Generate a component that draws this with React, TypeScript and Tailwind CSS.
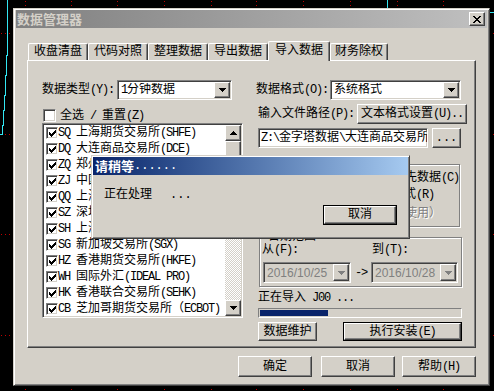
import type { ReactNode } from 'react'

const raised =
  'border border-t-white border-l-white border-r-[#404040] border-b-[#404040] shadow-[inset_-1px_-1px_#808080]'
const sunken =
  'border border-t-[#808080] border-l-[#808080] border-r-white border-b-white shadow-[inset_1px_1px_#404040,inset_-1px_-1px_#d4d0c8]'
const etched = 'border border-[#808080] shadow-[inset_1px_1px_#fff,1px_1px_#fff]'
const greyed = 'text-[#808080] [text-shadow:1px_1px_0_#fff]'

const markets = [
  ['SQ', '上海期货交易所(SHFE)'],
  ['DQ', '大连商品交易所(DCE)'],
  ['ZQ', '郑州商品交易所(CZCE)'],
  ['ZJ', '中国金融期货交易所(CFFEX)'],
  ['QQ', '上海国际能源交易中心(INE)'],
  ['SZ', '深圳证券交易所(SZSE)'],
  ['SH', '上海证券交易所(SSE)'],
  ['SG', '新加坡交易所(SGX)'],
  ['HZ', '香港期货交易所(HKFE)'],
  ['WH', '国际外汇(IDEAL PRO)'],
  ['HK', '香港联合交易所(SEHK)'],
  ['CB', '芝加哥期货交易所（ECBOT)'],
]

const tabs = [
  { label: '收盘清盘', w: 'w-[60px]' },
  { label: '代码对照', w: 'w-[60px]' },
  { label: '整理数据', w: 'w-[60px]' },
  { label: '导出数据', w: 'w-[60px]' },
  { label: '导入数据', w: 'w-[62px]', active: true },
  { label: '财务除权', w: 'w-[58px]' },
]

const checkPixels = [
  [6, 0], [5, 1], [6, 1], [0, 2], [4, 2], [5, 2], [6, 2], [0, 3], [1, 3], [3, 3], [4, 3], [5, 3],
  [0, 4], [1, 4], [2, 4], [3, 4], [4, 4], [1, 5], [2, 5], [3, 5], [2, 6],
]

// half-width latin runs: squeeze the mono font down to ~6px per char like the old system font
function t(text: string) {
  return text.split(/([\x20-\x7e]+)/).map((part, i) =>
    /^[\x20-\x7e]+$/.test(part) ? (
      <span key={i} className="tracking-[-1.2px]">
        {part}
      </span>
    ) : (
      part
    ),
  )
}

function Arrow({ up = false, gray = false }: { up?: boolean; gray?: boolean }) {
  return (
    <svg width="7" height="4" viewBox="0 0 7 4" shapeRendering="crispEdges">
      <path
        d={up ? 'M3 0h1v1h1v1h1v1h1v1H0V3h1V2h1V1h1z' : 'M0 0h7v1H6v1H5v1H4v1H3V3H2V2H1V1H0z'}
        fill={gray ? '#808080' : '#000'}
      />
    </svg>
  )
}

function Check({ checked = false, size = 'h-[13px] w-[13px]' }: { checked?: boolean; size?: string }) {
  return (
    <div className={`flex shrink-0 items-center justify-center bg-white ${size} ${sunken}`}>
      {checked && (
        <svg width="7" height="7" viewBox="0 0 7 7" shapeRendering="crispEdges">
          {checkPixels.map(([x, y]) => (
            <rect key={`${x}-${y}`} x={x} y={y} width="1" height="1" fill="#000" />
          ))}
        </svg>
      )}
    </div>
  )
}

function Button({
  className = '',
  children,
  isDefault = false,
}: {
  className?: string
  children: ReactNode
  isDefault?: boolean
}) {
  const face = (
    <div className={`flex h-full w-full items-center justify-center whitespace-pre bg-[#d4d0c8] ${raised}`}>
      {children}
    </div>
  )
  return isDefault ? (
    <div className={`shrink-0 border border-black ${className}`}>{face}</div>
  ) : (
    <div className={`shrink-0 ${className}`}>{face}</div>
  )
}

function Combo({ className = '', children }: { className?: string; children: ReactNode }) {
  return (
    <div className={`flex h-[20px] shrink-0 items-center bg-white p-px ${sunken} ${className}`}>
      <span className="flex-1 overflow-hidden whitespace-nowrap pl-[2px]">{children}</span>
      <div className={`flex h-[16px] w-[16px] items-center justify-center bg-[#d4d0c8] ${raised}`}>
        <Arrow />
      </div>
    </div>
  )
}

function DateBox({ className = '', value }: { className?: string; value: string }) {
  return (
    <div className={`flex h-[21px] shrink-0 items-center bg-[#d4d0c8] p-px ${sunken} ${className}`}>
      <span className="flex-1 pl-[2px] font-[family-name:Liberation_Sans,sans-serif] text-[#808080]">{value}</span>
      <div className={`flex h-[17px] w-[16px] items-center justify-center bg-[#d4d0c8] ${raised}`}>
        <Arrow gray />
      </div>
    </div>
  )
}

function Desktop() {
  const xs = [25, 71, 117, 164, 211, 256, 303, 350, 397, 443]
  const ys = [33, 134, 234, 335]
  return (
    <svg className="absolute inset-0" width="494" height="391" shapeRendering="crispEdges">
      {xs.map((x) => (
        <line key={x} x1={x + 0.5} y1="1" x2={x + 0.5} y2="391" stroke="#c00000" strokeDasharray="1 3" />
      ))}
      {ys.map((y) => (
        <line key={y} x1="1" y1={y + 0.5} x2="494" y2={y + 0.5} stroke="#c00000" strokeDasharray="1 3" />
      ))}
      <path d="M7.5 0V55H6.5V75H5.5V95H4.5V110H3.5V125H2.5V134.5H0" stroke="#33e6f2" fill="none" />
      <path d="M387.5 0V8M489 12.5H494" stroke="#33e6f2" fill="none" />
    </svg>
  )
}

export default function App() {
  return (
    <div className="relative h-[391px] w-[494px] overflow-hidden bg-black font-[family-name:Liberation_Mono,Noto_Sans_CJK_SC,monospace] text-[12px] leading-[14px] text-black">
      <Desktop />

      {/* main dialog */}
      <div className="absolute left-[13px] top-[8px] flex h-[378px] w-[477px] flex-col border border-t-[#d4d0c8] border-l-[#d4d0c8] border-r-[#404040] border-b-[#404040] bg-[#d4d0c8] px-[2px] pt-px shadow-[inset_1px_1px_#fff,inset_-1px_-1px_#808080]">
        <div className="flex h-[18px] shrink-0 items-center justify-between bg-linear-to-r from-[#808080] to-[#c0c0c0] pl-px pr-[2px]">
          <span className="font-[family-name:Noto_Sans_CJK_SC,sans-serif] text-[13px] font-bold leading-[18px] text-[#d4d0c8]">
            数据管理器
          </span>
          <div className={`flex h-[14px] w-[16px] items-center justify-center bg-[#d4d0c8] ${raised}`}>
            <svg width="8" height="7" viewBox="0 0 8 7" shapeRendering="crispEdges">
              <path d="M0 0h2v1h1v1h2V1h1V0h2v1H7v1H6v1H5v1h1v1h1v1h1v1H6V6H5V5H3v1H2v1H0V6h1V5h1V4h1V3H2V2H1V1H0z" />
            </svg>
          </div>
        </div>

        <div className="ml-[12px] mt-[13px] flex h-[19px] shrink-0 items-end">
          {tabs.map((tab) => (
            <div
              key={tab.label}
              className={`flex items-center justify-center rounded-t-[2px] border-l border-t border-r border-l-white border-t-white border-r-[#404040] bg-[#d4d0c8] shadow-[inset_-1px_0_#808080] ${tab.w} ${
                tab.active ? 'relative z-10 -mb-px h-[20px] pb-[2px]' : 'h-[17px]'
              }`}
            >
              {tab.label}
            </div>
          ))}
        </div>

        <div className={`ml-[11px] flex h-[288px] w-[449px] shrink-0 bg-[#d4d0c8] pl-[14px] pt-[19px] ${raised}`}>
          {/* left column */}
          <div className="flex w-[201px] flex-col">
            <div className="flex h-[20px] items-center">
              <span className="w-[75px] whitespace-nowrap">{t('数据类型(Y):')}</span>
              <Combo className="w-[115px]">{t('1分钟数据')}</Combo>
            </div>
            <div className="mt-[9px] flex h-[13px] items-center pl-px">
              <Check />
              <span className="ml-[4px] whitespace-pre">{t('全选 / 重置(Z)')}</span>
            </div>
            <div className={`mt-px flex h-[195px] bg-white p-px ${sunken}`}>
              <div className="flex-1 overflow-hidden">
                {markets.map(([code, name]) => (
                  <div key={code} className="flex h-[16px] items-center whitespace-nowrap pl-[2px]">
                    <Check checked size="h-[12px] w-[12px]" />
                    <span className="whitespace-pre">{t(`${code} ${name}`)}</span>
                  </div>
                ))}
              </div>
              <div className="flex w-[16px] flex-col">
                <div className={`flex h-[16px] items-center justify-center bg-[#d4d0c8] ${raised}`}>
                  <Arrow up />
                </div>
                <div className={`h-[56px] bg-[#d4d0c8] ${raised}`} />
                <div className="flex-1 bg-[repeating-conic-gradient(#d4d0c8_0%_25%,#ffffff_0%_50%)] bg-[length:2px_2px]" />
                <div className={`flex h-[16px] items-center justify-center bg-[#d4d0c8] ${raised}`}>
                  <Arrow />
                </div>
              </div>
            </div>
          </div>

          {/* right column */}
          <div className="ml-[13px] flex w-[211px] flex-col">
            <div className="flex h-[20px] items-center">
              <span className="w-[74px] whitespace-nowrap">{t('数据格式(O):')}</span>
              <Combo className="w-[131px]">系统格式</Combo>
            </div>
            <div className="mt-[4px] flex h-[20px] items-center pl-[2px]">
              <span className="w-[99px] whitespace-nowrap">{t('输入文件路径(P):')}</span>
              <Button className="h-[20px] w-[110px]">{t('文本格式设置(U)..')}</Button>
            </div>
            <div className="mt-[4px] flex h-[20px] items-center pl-[2px]">
              <div className={`flex h-[20px] w-[170px] items-center overflow-hidden bg-white px-[2px] ${sunken}`}>
                <span className="whitespace-nowrap">{t('Z:\\金字塔数据\\大连商品交易所')}</span>
              </div>
              <Button className="ml-[4px] h-[20px] w-[29px]">...</Button>
            </div>

            <div className={`relative ml-[2px] mt-[16px] h-[63px] w-[202px] shrink-0 pl-[93px] pt-[6px] ${etched}`}>
              <div className="absolute -top-[8px] left-[6px] bg-[#d4d0c8] px-[2px]">导入选项</div>
              <div className="flex h-[14px] items-center gap-[4px]">
                <Check />
                <span className="whitespace-nowrap">{t('覆盖原先数据(C)')}</span>
              </div>
              <div className="mt-[3px] flex h-[14px] items-center gap-[4px]">
                <div className="h-[12px] w-[12px] rounded-full bg-white shadow-[inset_1px_1px_#808080]" />
                <span className="whitespace-nowrap">{t('按新格式(R)')}</span>
              </div>
              <div className={`mt-[5px] h-[14px] whitespace-nowrap pl-[17px] ${greyed}`}>（暂停使用）</div>
            </div>

            <div className={`relative ml-[3px] mt-[10px] h-[50px] w-[203px] shrink-0 pl-[2px] ${etched}`}>
              <div className="absolute -top-[8px] left-[6px] bg-[#d4d0c8] px-[2px]">日期范围</div>
              <div className="mt-[5px] flex h-[14px] items-center">
                <span className="w-[110px]">{t('从(F):')}</span>
                <span>{t('到(T):')}</span>
              </div>
              <div className="mt-[5px] flex items-center pl-px">
                <DateBox className="w-[88px]" value="2016/10/25" />
                <span className="w-[20px] text-center">{t('->')}</span>
                <DateBox className="w-[87px]" value="2016/10/28" />
              </div>
            </div>

            <div className="mt-[4px] h-[14px] whitespace-pre pl-[2px]">{t('正在导入 J00 ...')}</div>
            <div className="ml-[2px] mt-[3px] h-[10px] w-[204px] border border-t-[#808080] border-l-[#808080] border-r-white border-b-white p-px">
              <div className="h-full w-[68px] bg-[#0a246a]" />
            </div>
            <div className="mt-[4px] flex h-[19px] pl-[2px]">
              <Button className="h-[19px] w-[59px]">数据维护</Button>
              <Button isDefault className="ml-[26px] h-[19px] w-[119px]">
                {t('执行安装(E)')}
              </Button>
            </div>
          </div>
        </div>

        <div className="mt-[8px] flex h-[21px] shrink-0 justify-end pr-[11px]">
          <Button className="h-[21px] w-[74px]">确定</Button>
          <Button className="ml-[9px] h-[21px] w-[74px]">取消</Button>
          <Button className="ml-[7px] h-[21px] w-[74px]">{t('帮助(H)')}</Button>
        </div>
      </div>

      {/* progress popup */}
      <div className="absolute left-[91px] top-[155px] z-20 flex h-[84px] w-[319px] flex-col border border-t-[#d4d0c8] border-l-[#d4d0c8] border-r-[#404040] border-b-[#404040] bg-[#d4d0c8] p-px shadow-[inset_1px_1px_#fff,inset_-1px_-1px_#808080]">
        <div className="flex h-[18px] shrink-0 items-center bg-linear-to-r from-[#0a246a] to-[#a6caf0] pl-[2px] text-white">
          <span className="font-[family-name:Noto_Sans_CJK_SC,sans-serif] text-[13px] font-bold leading-[18px]">请稍等</span>
          <span className="leading-[18px]">......</span>
        </div>
        <div className="pl-[11px] pt-[13px]">
          <span>正在处理</span>
          <span className="ml-[18px]">...</span>
        </div>
        <div className="mt-[3px] flex justify-end pr-[11px]">
          <Button isDefault className="h-[20px] w-[74px]">
            取消
          </Button>
        </div>
      </div>
    </div>
  )
}
